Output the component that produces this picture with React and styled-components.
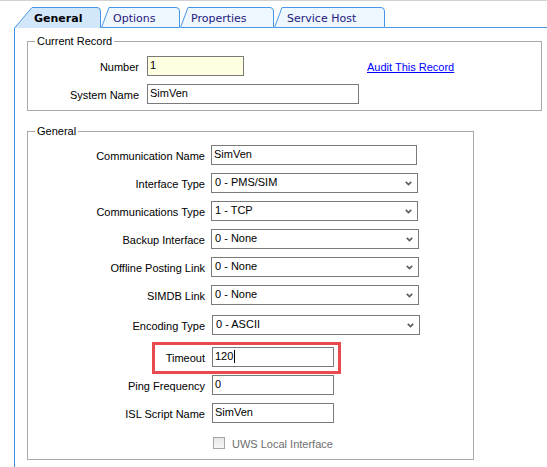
import React from 'react';
import styled, { createGlobalStyle } from 'styled-components';

const Global = createGlobalStyle`
  html, body { margin: 0; padding: 0; background: #fff; }
  body { font-family: "Liberation Sans", Arial, sans-serif; font-size: 11px; color: #000; }
  * { box-sizing: border-box; }
`;

const Window = styled.div`
  width: 547px;
  height: 467px;
  overflow: hidden;
  border-top: 1px solid #d2d2d2;
  display: flex;
  flex-direction: column;
  background: #fff;
`;

const TabStrip = styled.div`
  display: flex;
  align-items: flex-end;
  height: 27px;
  padding-left: 14px;
  flex: none;
`;

const TabItem = styled.div`
  position: relative;
  width: ${p => p.$w}px;
  height: 21px;
  flex: none;
  display: flex;
  align-items: center;
  padding-left: ${p => p.$pl}px;
  font-family: "DejaVu Sans", Verdana, sans-serif;
  font-size: 11px;
  font-weight: ${p => (p.$active ? 'bold' : 'normal')};
  color: ${p => (p.$active ? '#000' : '#23207e')};
  margin-left: ${p => p.$ml || 0}px;
`;

const TabShape = styled.svg`
  position: absolute;
  left: 0;
  top: 0;
`;

const TabText = styled.span`
  position: relative;
  line-height: 13px;
  margin-top: 1px;
`;

const StripLine = styled.div`
  flex: 1;
  height: 1px;
  background: #4797e8;
`;

function Tab({ w, pl, active, ml, children }) {
  const d = active
    ? `M0.5 21 L18 0.5 L${w - 4} 0.5 Q${w - 0.5} 0.5 ${w - 0.5} 4 L${w - 0.5} 21`
    : `M0.5 20.5 L8 0.5 L${w - 4} 0.5 Q${w - 0.5} 0.5 ${w - 0.5} 4 L${w - 0.5} 20.5 Z`;
  return (
    <TabItem $w={w} $pl={pl} $active={active} $ml={ml}>
      <TabShape width={w} height={21} viewBox={`0 0 ${w} 21`}>
        <path d={d} fill={active ? '#d3e7fa' : '#eef6fe'} stroke="#4797e8" strokeWidth="1" />
      </TabShape>
      <TabText>{children}</TabText>
    </TabItem>
  );
}

const Panel = styled.div`
  flex: 1;
  margin-left: 14px;
  border-left: 1px solid #3d8fe6;
  padding: 7px 0 0 12px;
`;

const Group = styled.fieldset`
  margin: ${p => p.$mt || 0}px 0 0 0;
  padding: 0;
  width: ${p => p.$w}px;
  min-width: 0;
  border: 1px solid #a9a9a9;
`;

const Legend = styled.legend`
  margin-left: 7px;
  padding: 0 2px;
  font-size: 11px;
  line-height: 13px;
`;

const GroupBody = styled.div`
  display: flex;
  flex-direction: column;
  padding: ${p => p.$pt}px 0 ${p => p.$pb}px 0;
`;

const Row = styled.div`
  position: relative;
  display: flex;
  align-items: flex-start;
  height: 20px;
  margin-top: ${p => p.$mt || 0}px;
  gap: ${p => p.$gap || 6}px;
`;

const Label = styled.div`
  width: ${p => p.$w}px;
  flex: none;
  text-align: right;
  line-height: 20px;
  padding-top: 1px;
  white-space: nowrap;
`;

const Field = styled.div`
  width: ${p => p.$w}px;
  height: 20px;
  flex: none;
  border: 1px solid #7a7a7a;
  background: ${p => (p.$yellow ? '#ffffe1' : '#fff')};
  padding: 0 ${p => (p.$select ? 5 : 2)}px 0 ${p => (p.$select ? 3 : 2)}px;
  line-height: 16px;
  white-space: nowrap;
  display: flex;
  align-items: flex-start;
  justify-content: space-between;
`;

const Caret = styled.span`
  display: inline-block;
  width: 1px;
  height: 13px;
  background: #000;
  margin-top: 2px;
  margin-left: 1px;
  vertical-align: top;
`;

const Chevron = styled.svg`
  margin-top: 7px;
  flex: none;
`;

const LinkText = styled.a`
  color: #0000ff;
  text-decoration: underline;
  line-height: 20px;
  padding-top: 1px;
  margin-left: 115px;
  cursor: pointer;
  white-space: nowrap;
`;

const Highlight = styled.div`
  position: absolute;
  left: 124px;
  top: -5px;
  width: 189px;
  height: 32px;
  border: 3px solid #e84a4d;
  pointer-events: none;
`;

const CheckRow = styled.div`
  display: flex;
  align-items: center;
  height: 12px;
  margin-top: ${p => p.$mt}px;
  padding-left: 185px;
  gap: 7px;
`;

const CheckBox = styled.div`
  width: 12px;
  height: 12px;
  border: 1px solid #a6a6a6;
  background: linear-gradient(#e8e8e8, #f6f6f6);
`;

const CheckLabel = styled.span`
  color: #6d6d6d;
  line-height: 14px;
  margin-top: 1px;
`;

function Select({ w, children }) {
  return (
    <Field $w={w} $select>
      <span>{children}</span>
      <Chevron width="7" height="5" viewBox="0 0 7 5">
        <polyline points="0.8,0.8 3.5,3.6 6.2,0.8" fill="none" stroke="#5f5f5f" strokeWidth="1.7" />
      </Chevron>
    </Field>
  );
}

export default function App() {
  return (
    <>
      <Global />
      <Window>
        <TabStrip>
          <Tab w={87} pl={20} active>General</Tab>
          <Tab w={79} pl={12}>Options</Tab>
          <Tab w={94} pl={11}>Properties</Tab>
          <Tab w={111} pl={13}>Service Host</Tab>
          <StripLine />
        </TabStrip>
        <Panel>
          <Group $w={515}>
            <Legend>Current Record</Legend>
            <GroupBody $pt={8} $pb={6}>
              <Row $gap={8}>
                <Label $w={111}>Number</Label>
                <Field $w={97} $yellow>1</Field>
                <LinkText>Audit This Record</LinkText>
              </Row>
              <Row $gap={8} $mt={8}>
                <Label $w={111}>System Name</Label>
                <Field $w={212}>SimVen</Field>
              </Row>
            </GroupBody>
          </Group>

          <Group $w={447} $mt={14}>
            <Legend>General</Legend>
            <GroupBody $pt={7} $pb={10}>
              <Row>
                <Label $w={177}>Communication Name</Label>
                <Field $w={206}>SimVen</Field>
              </Row>
              <Row $mt={8}>
                <Label $w={177}>Interface Type</Label>
                <Select w={207}>0 - PMS/SIM</Select>
              </Row>
              <Row $mt={8}>
                <Label $w={177}>Communications Type</Label>
                <Select w={207}>1 - TCP</Select>
              </Row>
              <Row $mt={8}>
                <Label $w={177}>Backup Interface</Label>
                <Select w={208}>0 - None</Select>
              </Row>
              <Row $mt={8}>
                <Label $w={177}>Offline Posting Link</Label>
                <Select w={208}>0 - None</Select>
              </Row>
              <Row $mt={8}>
                <Label $w={177}>SIMDB Link</Label>
                <Select w={208}>0 - None</Select>
              </Row>
              <Row $mt={10} $gap={7}>
                <Label $w={177}>Encoding Type</Label>
                <Select w={208}>0 - ASCII</Select>
              </Row>
              <Row $mt={12} $gap={7}>
                <Label $w={177}>Timeout</Label>
                <Field $w={122}><span>120<Caret /></span></Field>
                <Highlight />
              </Row>
              <Row $mt={8} $gap={7}>
                <Label $w={177}>Ping Frequency</Label>
                <Field $w={122}>0</Field>
              </Row>
              <Row $mt={8} $gap={7}>
                <Label $w={177}>ISL Script Name</Label>
                <Field $w={122}>SimVen</Field>
              </Row>
              <CheckRow $mt={14}>
                <CheckBox />
                <CheckLabel>UWS Local Interface</CheckLabel>
              </CheckRow>
            </GroupBody>
          </Group>
        </Panel>
      </Window>
    </>
  );
}
